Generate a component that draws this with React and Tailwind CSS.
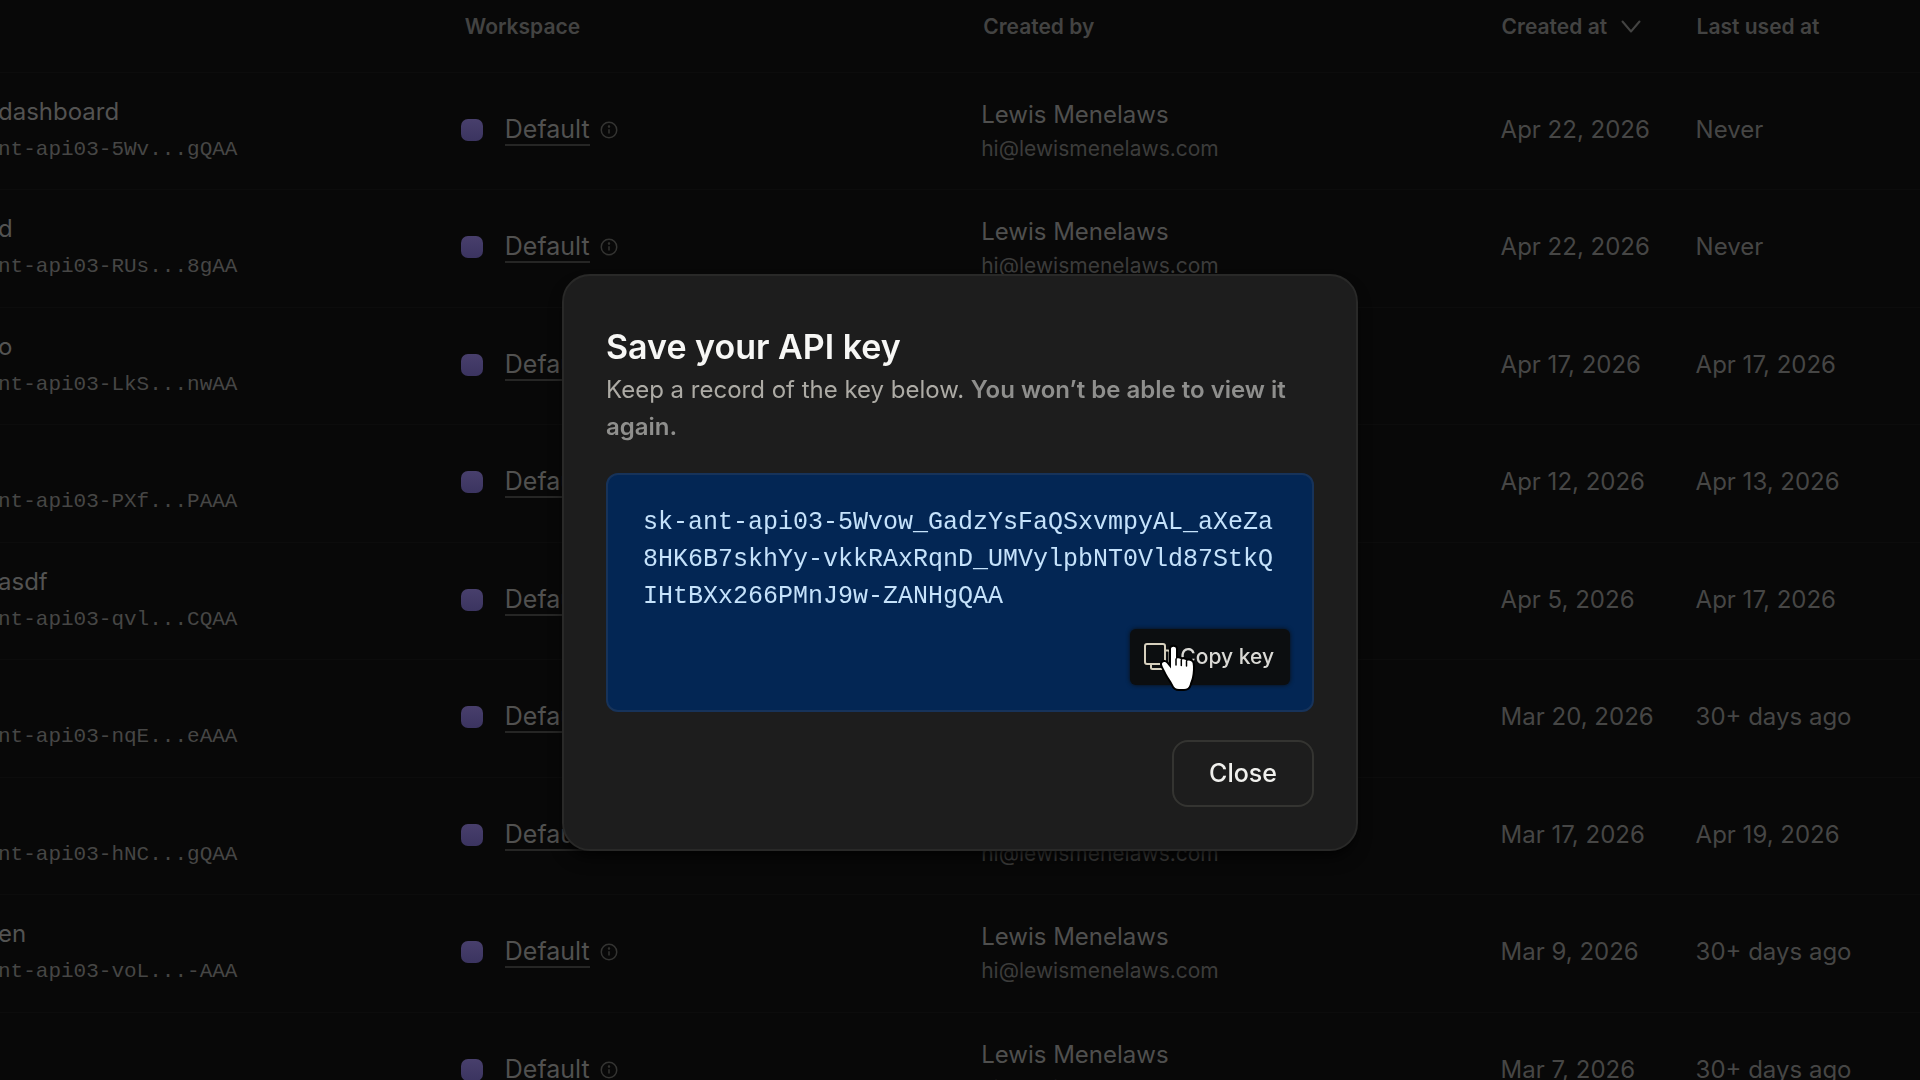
import React from "react";

const sans = "font-['Inter',sans-serif]";
const mono = "font-['Liberation_Mono',monospace]";

const rows = [
  { name: "dashboard", key: "nt-api03-5Wv...gQAA", created: "Apr 22, 2026", used: "Never" },
  { name: "d", key: "nt-api03-RUs...8gAA", created: "Apr 22, 2026", used: "Never" },
  { name: "o", key: "nt-api03-LkS...nwAA", created: "Apr 17, 2026", used: "Apr 17, 2026" },
  { name: "\u00a0", key: "nt-api03-PXf...PAAA", created: "Apr 12, 2026", used: "Apr 13, 2026" },
  { name: "asdf", key: "nt-api03-qvl...CQAA", created: "Apr 5, 2026", used: "Apr 17, 2026" },
  { name: "\u00a0", key: "nt-api03-nqE...eAAA", created: "Mar 20, 2026", used: "30+ days ago" },
  { name: "\u00a0", key: "nt-api03-hNC...gQAA", created: "Mar 17, 2026", used: "Apr 19, 2026" },
  { name: "en", key: "nt-api03-voL...-AAA", created: "Mar 9, 2026", used: "30+ days ago" },
  { name: "\u00a0", key: "\u00a0", created: "Mar 7, 2026", used: "30+ days ago" },
];

function InfoIcon() {
  return (
    <svg viewBox="0 0 18 18" className="size-[18px] text-[#343432]" fill="none" stroke="currentColor" strokeWidth="1.5" aria-hidden="true">
      <circle cx="9" cy="9" r="7.75" />
      <path d="M9 8.2V12.6" />
      <circle cx="9" cy="5.6" r="0.5" fill="currentColor" />
    </svg>
  );
}

function CopyIcon() {
  return (
    <svg viewBox="0 0 28 28" className="size-7 shrink-0 text-[#d6cfbd]" fill="none" stroke="currentColor" strokeWidth="2" strokeLinejoin="round" aria-hidden="true">
      <rect x="1" y="1" width="20" height="20" rx="2" />
      <path d="M7 21v3.500a1.500 1.500 0 0 0 1.500 1.500h15.500a1.500 1.500 0 0 0 1.500-1.500V9a1.500 1.500 0 0 0-1.500-1.500h-3" />
    </svg>
  );
}

function HandCursor() {
  return (
    <svg viewBox="0 0 40 52" className="pointer-events-none absolute left-7 top-3 h-[52px] w-10" aria-hidden="true">
      <path
        d="M13 8C13 5 18 5 18 8V18.500C19 16.500 23 17 23.300 19.200C24.300 17.400 28 18 28.500 20.200C30 18.600 34 19.400 34.600 22C35.400 26 35 32 34 36.500C33.300 39.500 32.300 41 31.800 43.500C31 46.500 29 48 26 48H21C18 48 16 46.500 14.800 43.500C13 39.500 10.500 37 8.500 33C6.800 29 4.500 26 4 23.500C3.600 20.800 7 20 8.800 22.200L13 27.500Z"
        fill="#fff"
        stroke="#000"
        strokeWidth="4"
        strokeLinejoin="round"
        paintOrder="stroke"
      />
      <path d="M18 18v6M23.300 19v5.500M28.500 20.500v4.500" stroke="#000" strokeWidth="1.500" strokeLinecap="round" />
    </svg>
  );
}

function KeysTable() {
  return (
    <table className="w-full table-fixed border-collapse text-left text-2xl leading-[30px] text-[#464645]">
      <colgroup>
        <col className="w-[24%]" />
        <col className="w-[27%]" />
        <col className="w-[27%]" />
        <col className="w-[195px]" />
        <col />
      </colgroup>
      <thead>
        <tr className="h-[72px] border-b border-[#0c0c0c] align-top text-[21px] text-[#434342]">
          <th aria-label="Key" />
          <th className="pl-1 pt-3 font-semibold">Workspace</th>
          <th className="pl-1 pt-3 font-semibold">Created by</th>
          <th className="pl-1 pt-3 font-semibold">
            <button type="button" className="flex items-center gap-3.5 font-semibold">
              Created at
              <svg viewBox="0 0 20 14" className="h-3.5 w-5" fill="none" stroke="currentColor" strokeWidth="2" strokeLinecap="round" strokeLinejoin="round" aria-hidden="true">
                <path d="M1.500 1.500 10 11.500 18.500 1.500" />
              </svg>
            </button>
          </th>
          <th className="pl-1 pt-3 font-semibold">Last used at</th>
        </tr>
      </thead>
      <tbody>
        {rows.map((row, i) => (
          <tr key={i} className="h-[117px] border-b border-[#0c0c0c] even:h-[118px]">
            <td className="whitespace-nowrap">
              <div className="-ml-0.5 text-[#535352]">{row.name}</div>
              <div className={`${mono} -ml-0.5 mt-2 text-[21px]`}>{row.key}</div>
            </td>
            <td className="pb-0.5">
              <div className="flex items-center">
                <span className="size-[22px] rounded-[7px] bg-linear-to-b from-[#483f6c] to-[#3b3460]" />
                <a href="#default" className="ml-[22px] border-b-2 border-[#262625] text-[25px] text-[#515150]">Default</a>
                <span className="ml-2.5"><InfoIcon /></span>
              </div>
            </td>
            <td className="pl-0.5 pt-0.5">
              <div className="text-[#4f4f4e]">Lewis Menelaws</div>
              <div className="mt-1 text-[21px] text-[#3c3c3b]">hi@lewismenelaws.com</div>
            </td>
            <td className="pb-0.5 pl-[3px]">{row.created}</td>
            <td className="pb-0.5 pl-[3px]">{row.used}</td>
          </tr>
        ))}
      </tbody>
    </table>
  );
}

export default function App() {
  return (
    <div className={`${sans} h-screen overflow-hidden bg-[#080808]`}>
      <main>
        <KeysTable />
      </main>
      <div className="fixed inset-0 flex items-center justify-center pt-[45px]">
        <section
          role="dialog"
          aria-modal="true"
          aria-labelledby="dialog-title"
          className="w-full max-w-[796px] rounded-[28px] border-2 border-[#292928] bg-[#1d1d1d] px-[42px] pb-[42px] pt-[46px] shadow-lg shadow-black/60"
        >
          <h2 id="dialog-title" className="text-[34px] font-semibold leading-[49px] text-[#f7f7f5]">Save your API key</h2>
          <p className="text-2xl leading-[37px] text-[#adaba5]">
            Keep a record of the key below. <strong className="font-semibold text-[#8f8f8d]">You won’t be able to view it again.</strong>
          </p>
          <div className="mt-7 rounded-xl border-2 border-[#17335a] bg-[#032654] pb-[25px] pl-[35px] pr-[22px] pt-[29px]">
            <code className={`${mono} block break-all pr-3 text-[25px] leading-[37px] text-[#c5e2fb]`}>
              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
            </code>
            <div className="mt-3.5 flex justify-end">
              <button type="button" className="relative flex h-14 items-center gap-2 rounded-md bg-[#0c0e10] pl-3.5 pr-4 text-[21px] font-medium text-[#dad9d5] shadow-[0_0_4px_#0c0e10]">
                <CopyIcon />
                Copy key
                <HandCursor />
              </button>
            </div>
          </div>
          <div className="mt-7 flex justify-end">
            <button type="button" className="h-[67px] rounded-2xl border-2 border-[#343431] px-[35px] text-[25px] font-medium text-[#f0f0ed]">
              Close
            </button>
          </div>
        </section>
      </div>
    </div>
  );
}
